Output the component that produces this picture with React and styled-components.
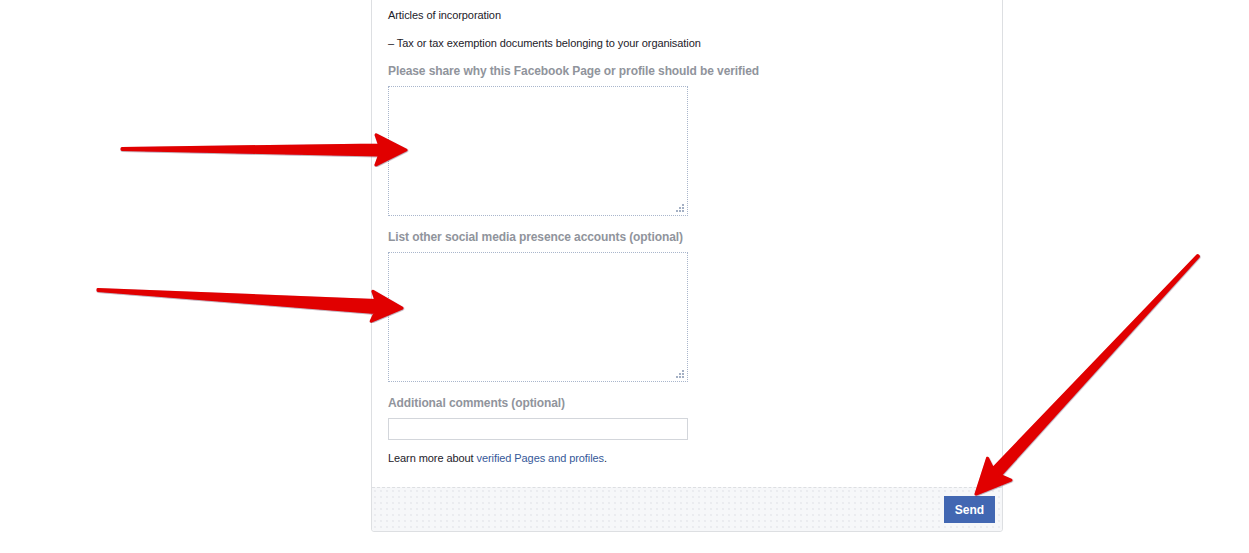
import React from "react";
import styled, { createGlobalStyle } from "styled-components";

const GlobalStyle = createGlobalStyle`
  html, body {
    margin: 0;
    padding: 0;
    background: #ffffff;
  }
  body {
    font-family: "Liberation Sans", Arial, sans-serif;
    overflow: hidden;
  }
`;

const ARROWS = [
  { from: [122, 149], to: [406, 150], head: 30, half: 15, shaft: 5 },
  { from: [98, 290], to: [402, 308], head: 30, half: 15, shaft: 6 },
  { from: [1198, 256], to: [976, 494], head: 34, half: 16, shaft: 5 },
];

// builds the outline of a tapered arrow from tail to tip
const arrowPoints = ({ from, to, head, half, shaft }) => {
  const [x1, y1] = from;
  const [x2, y2] = to;
  const len = Math.hypot(x2 - x1, y2 - y1);
  const ux = (x2 - x1) / len;
  const uy = (y2 - y1) / len;
  const nx = -uy;
  const ny = ux;
  const bx = x2 - ux * head * 0.88;
  const by = y2 - uy * head * 0.88;
  const cx = x2 - ux * head;
  const cy = y2 - uy * head;
  const pts = [
    [x1 + nx * 0.6, y1 + ny * 0.6],
    [bx + nx * shaft, by + ny * shaft],
    [cx + nx * half, cy + ny * half],
    [x2, y2],
    [cx - nx * half, cy - ny * half],
    [bx - nx * shaft, by - ny * shaft],
    [x1 - nx * 0.6, y1 - ny * 0.6],
  ];
  return pts.map((p) => p.map((v) => v.toFixed(1)).join(",")).join(" ");
};

const App = () => {
  return (
    <Page>
      <GlobalStyle />
      <Panel>
        <Body>
          <Note>Articles of incorporation</Note>
          <Note>– Tax or tax exemption documents belonging to your organisation</Note>

          <Field>
            <Label>Please share why this Facebook Page or profile should be verified</Label>
            <AreaWrap>
              <TextArea />
              <Grip />
            </AreaWrap>
          </Field>

          <Field>
            <Label>List other social media presence accounts (optional)</Label>
            <AreaWrap>
              <TextArea />
              <Grip />
            </AreaWrap>
          </Field>

          <Field>
            <Label>Additional comments (optional)</Label>
            <TextInput type="text" />
          </Field>

          <LearnMore>
            Learn more about <Link href="#">verified Pages and profiles</Link>.
          </LearnMore>
        </Body>
        <Footer>
          <SendButton type="button">Send</SendButton>
        </Footer>
      </Panel>

      <Overlay width="1249" height="553" viewBox="0 0 1249 553">
        <defs>
          <filter id="edge" x="-5%" y="-5%" width="110%" height="110%">
            <feDropShadow dx="0.4" dy="0.6" stdDeviation="0.5" floodColor="#3a1030" floodOpacity="0.55" />
          </filter>
        </defs>
        {ARROWS.map((a, i) => (
          <polygon
            key={i}
            points={arrowPoints(a)}
            fill="#e10000"
            stroke="#e10000"
            strokeWidth="3"
            strokeLinejoin="round"
            filter="url(#edge)"
          />
        ))}
      </Overlay>
    </Page>
  );
};

export default App;

const Page = styled.div`
  position: relative;
  width: 1249px;
  height: 553px;
  overflow: hidden;
`;

const Panel = styled.div`
  margin: -1px 0 0 371px;
  width: 630px;
  border: 1px solid #dddfe2;
  border-radius: 0 0 3px 3px;
  background: #ffffff;
`;

const Body = styled.div`
  padding: 7px 16px 21px 16px;
`;

const Note = styled.p`
  margin: 0 0 12px 0;
  font-size: 11px;
  letter-spacing: -0.08px;
  line-height: 16px;
  color: #1d2129;
`;

const Field = styled.div`
  display: flex;
  flex-direction: column;
  margin-bottom: 13px;
`;

const Label = styled.label`
  font-size: 12px;
  font-weight: bold;
  letter-spacing: -0.1px;
  line-height: 16px;
  color: #90949c;
  margin-bottom: 7px;
`;

const AreaWrap = styled.div`
  position: relative;
  width: 300px;
  height: 130px;
`;

const TextArea = styled.textarea`
  display: block;
  box-sizing: border-box;
  width: 300px;
  height: 130px;
  border: 1px dotted #a9b6cc;
  resize: none;
  padding: 3px;
  font-family: "Liberation Sans", Arial, sans-serif;
  font-size: 11px;
  outline: none;
`;

const Grip = styled.span`
  position: absolute;
  right: 4px;
  bottom: 4px;
  width: 2px;
  height: 2px;
  background: #a4b0c4;
  box-shadow: -3px 0 0 #a4b0c4, -6px 0 0 #a4b0c4, 0 -3px 0 #a4b0c4,
    -3px -3px 0 #a4b0c4, 0 -6px 0 #a4b0c4;
  pointer-events: none;
`;

const TextInput = styled.input`
  display: block;
  box-sizing: border-box;
  width: 300px;
  height: 22px;
  border: 1px solid #d3d6db;
  padding: 3px;
  font-family: "Liberation Sans", Arial, sans-serif;
  font-size: 11px;
  outline: none;
`;

const LearnMore = styled.p`
  margin: -3px 0 0 0;
  font-size: 11px;
  letter-spacing: -0.08px;
  line-height: 16px;
  color: #1d2129;
`;

const Link = styled.a`
  color: #365899;
  text-decoration: none;
`;

const Footer = styled.div`
  display: flex;
  justify-content: flex-end;
  align-items: center;
  height: 43px;
  padding: 0 7px 0 0;
  border-top: 1px dashed #dddfe2;
  border-radius: 0 0 3px 3px;
  background-color: #f6f7f9;
  background-image: radial-gradient(circle, #e4e6ea 0.6px, transparent 0.9px);
  background-size: 6px 6px;
`;

const SendButton = styled.button`
  width: 51px;
  height: 27px;
  border: none;
  background: #4267b2;
  color: #ffffff;
  font-family: "Liberation Sans", Arial, sans-serif;
  font-size: 12px;
  font-weight: bold;
  cursor: pointer;
`;

const Overlay = styled.svg`
  position: absolute;
  left: 0;
  top: 0;
  pointer-events: none;
`;
